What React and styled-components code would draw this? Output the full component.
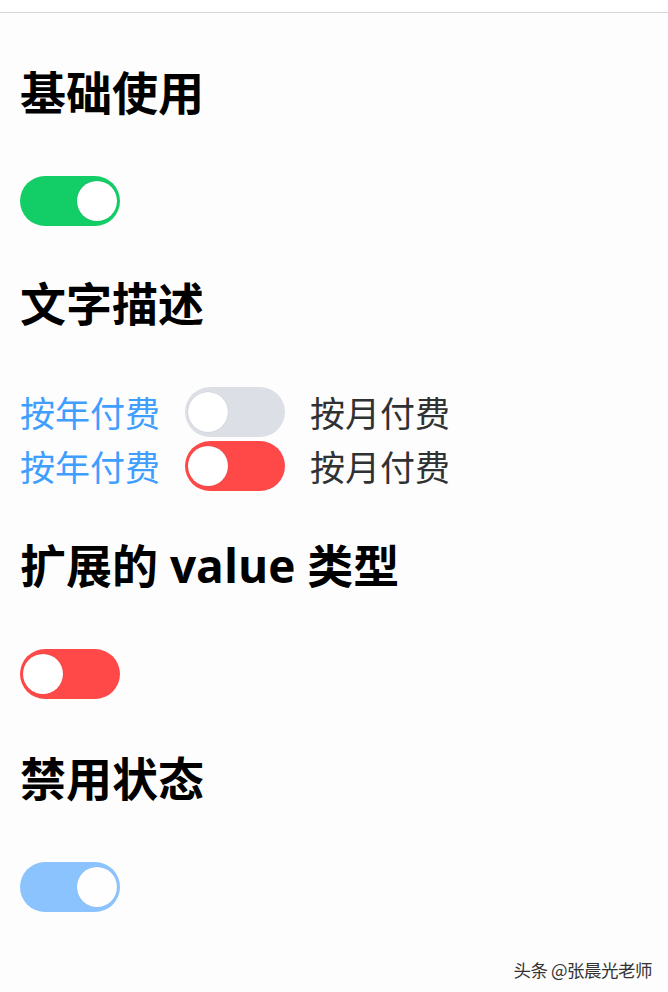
import React from "react";
import styled, { createGlobalStyle } from "styled-components";

const GlobalStyle = createGlobalStyle`
  html, body {
    margin: 0;
    padding: 0;
    background: #fdfdfd;
  }
  body {
    font-family: "Noto Sans CJK SC", "Noto Sans", sans-serif;
  }
`;

const Page = styled.div`
  position: relative;
  width: 668px;
  box-sizing: border-box;
  border-top: 1px solid #d6d6d6;
  margin-top: 12px;
  height: 980px;
  padding: 52px 0 0 20px;
  background: #fdfdfd;
`;

const Topbar = styled.div`
  position: absolute;
  top: -13px;
  left: 0;
  right: 0;
  height: 12px;
  background: #ffffff;
`;

const Section = styled.section`
  display: flex;
  flex-direction: column;
  align-items: flex-start;
  margin-bottom: ${(p) => p.$after || 50}px;
`;

const Title = styled.h2`
  margin: 2px 0 59px;
  height: 50px;
  line-height: 50px;
  font-family: "Open Sans", "Noto Sans CJK SC", sans-serif;
  font-size: 46px;
  font-weight: 700;
  color: #000;
  white-space: nowrap;
`;

const Rows = styled.div`
  display: flex;
  flex-direction: column;
  gap: 4px;
`;

const Row = styled.div`
  display: flex;
  align-items: center;
  height: 50px;
`;

const Label = styled.span`
  font-size: 35px;
  line-height: 50px;
  color: ${(p) => (p.$active ? "#409eff" : "#303133")};
  margin: ${(p) => (p.$side === "left" ? "0 25px 0 0" : "0 0 0 25px")};
`;

const Track = styled.span`
  position: relative;
  display: inline-block;
  width: 100px;
  height: 50px;
  border-radius: 25px;
  box-sizing: border-box;
  background: ${(p) => p.$color};
  opacity: ${(p) => (p.$disabled ? 0.6 : 1)};
`;

const Knob = styled.span`
  position: absolute;
  top: 5px;
  left: ${(p) => (p.$on ? "57px" : "3px")};
  width: 40px;
  height: 40px;
  border-radius: 50%;
  background: #fff;
  box-shadow: 0 0 1px rgba(0, 0, 0, 0.25);
`;

const Watermark = styled.div`
  position: absolute;
  right: 16px;
  bottom: 10px;
  font-size: 17.5px;
  color: #333;
  letter-spacing: -0.5px;
  text-shadow: 0 0 2px #fff, 0 0 2px #fff;
`;

const Switch = ({ on, onColor = "#13ce66", offColor = "#dcdfe6", disabled }) => (
  <Track $color={on ? onColor : offColor} $disabled={disabled}>
    <Knob $on={on} />
  </Track>
);

export default function App() {
  return (
    <>
      <GlobalStyle />
      <Page>
        <Topbar />
        <Section $after={50}>
          <Title>基础使用</Title>
          <Switch on />
        </Section>

        <Section $after={47}>
          <Title>文字描述</Title>
          <Rows>
            <Row>
              <Label $side="left" $active>按年付费</Label>
              <Switch on={false} />
              <Label $side="right">按月付费</Label>
            </Row>
            <Row>
              <Label $side="left" $active>按年付费</Label>
              <Switch on={false} offColor="#ff4949" />
              <Label $side="right">按月付费</Label>
            </Row>
          </Rows>
        </Section>

        <Section $after={52}>
          <Title>扩展的 value 类型</Title>
          <Switch on={false} offColor="#ff4949" />
        </Section>

        <Section>
          <Title>禁用状态</Title>
          <Switch on onColor="#409eff" disabled />
        </Section>

        <Watermark>头条 @张晨光老师</Watermark>
      </Page>
    </>
  );
}
